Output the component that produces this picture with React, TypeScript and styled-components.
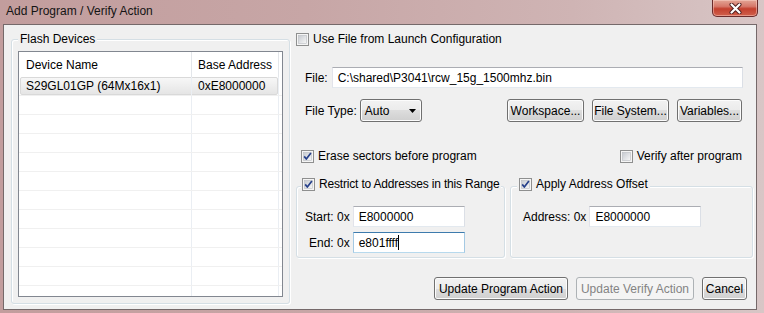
import { useId } from "react";
import styled, { createGlobalStyle } from "styled-components";

const GlobalStyle = createGlobalStyle`
  html, body {
    margin: 0;
    padding: 0;
    background: #fff;
  }
  body {
    font-family: "Liberation Sans", Arial, sans-serif;
    font-size: 12px;
    color: #000;
  }
  * {
    box-sizing: border-box;
  }
`;

const Frame = styled.div`
  width: 764px;
  height: 313px;
  display: flex;
  flex-direction: column;
  padding: 0 7px 3px 3px;
  background: linear-gradient(90deg, #c29d9d 0%, #c7a6a6 40%, #cfb4b4 75%, #d8c6c6 100%);
  overflow: hidden;
`;

const TitleBar = styled.div`
  height: 24px;
  flex: none;
  display: flex;
  align-items: flex-start;
  justify-content: space-between;
`;

const Title = styled.div`
  padding: 4px 0 0 3px;
  line-height: 15px;
  color: #141414;
`;

const CloseButton = styled.div`
  width: 46px;
  height: 17px;
  margin-right: -1px;
  display: flex;
  align-items: center;
  justify-content: center;
  border: 1px solid #6a2b2b;
  border-top: none;
  border-radius: 0 0 5px 5px;
  background: linear-gradient(#e3a595 0%, #d6786a 40%, #c3402e 55%, #d0604c 100%);
  box-shadow: inset 0 0 0 1px rgba(255, 220, 210, 0.45);
`;

const Client = styled.div`
  flex: 1;
  display: flex;
  gap: 6px;
  padding: 7px 3px 5px 7px;
  border: 1px solid #75696a;
  background: #f0f0f0;
`;

const GroupBox = styled.fieldset<{ $inset: number }>`
  margin: 0;
  min-width: 0;
  padding: 0 0 0 ${(p) => p.$inset}px;
  border: 1px solid #d5dfe5;
  border-radius: 3px;
  box-shadow: 1px 1px 0 #fff, inset 1px 1px 0 #fff;
`;

const Legend = styled.legend<{ $tight?: boolean }>`
  padding: 0 2px 0 ${(p) => (p.$tight ? 1 : 2)}px;
  line-height: 15px;
  background: #f0f0f0;
  letter-spacing: ${(p) => (p.$tight ? "-0.18px" : "normal")};
`;

const DevicesGroup = styled(GroupBox)`
  width: 279px;
  flex: none;
  padding: 4px 6px 6px 6px;
`;

const Table = styled.div`
  height: 246px;
  border: 1px solid #828790;
  background: #fff;
  overflow: hidden;
`;

const HeaderRow = styled.div`
  height: 25px;
  display: flex;
`;

const HeaderCell = styled.div<{ $w: number; $pad: number }>`
  width: ${(p) => p.$w}px;
  padding-left: ${(p) => p.$pad}px;
  display: flex;
  align-items: center;
  border-right: 1px solid #e3e6ea;
  white-space: nowrap;
`;

const Row = styled.div<{ $selected?: boolean }>`
  position: relative;
  height: 19px;
  display: flex;
  border-bottom: 1px solid #f0f0f0;

  ${(p) =>
    p.$selected &&
    `
    &::before {
      content: "";
      position: absolute;
      left: 1px;
      right: 4px;
      top: 0;
      bottom: 0;
      border: 1px solid #d9d9d9;
      border-radius: 2px;
      background: linear-gradient(#f7f7f7, #e5e5e5);
    }
  `}
`;

const Cell = styled.div<{ $w: number; $pad: number }>`
  position: relative;
  width: ${(p) => p.$w}px;
  padding-left: ${(p) => p.$pad}px;
  display: flex;
  align-items: center;
  border-right: 1px solid #eaeef3;
  white-space: nowrap;
`;

const RightPane = styled.div`
  flex: 1;
  display: flex;
  flex-direction: column;
`;

const CheckLabel = styled.label`
  display: inline-flex;
  align-items: center;
  gap: 4px;
  height: 15px;
  line-height: 15px;
  white-space: nowrap;
`;

const FileRow = styled.div`
  margin-top: 20px;
  padding: 0 10px 0 9px;
  display: flex;
  align-items: center;
  gap: 4px;
`;

const TextBox = styled.div<{ $w?: number; $focused?: boolean }>`
  height: 21px;
  ${(p) => (p.$w ? `width: ${p.$w}px;` : "flex: 1;")}
  display: flex;
  align-items: center;
  padding: 0 5px;
  background: #fff;
  border: 1px solid;
  border-color: ${(p) =>
    p.$focused ? "#3d7bad #a4c9e3 #b7d9ed #a4c9e3" : "#abadb3 #dbdfe6 #e3e9ef #e2e3ea"};
  white-space: nowrap;
`;

const Caret = styled.span`
  width: 1px;
  height: 15px;
  background: #000;
`;

const TypeRow = styled.div`
  margin-top: 11px;
  padding: 0 11px 0 9px;
  display: flex;
  align-items: center;
`;

const Select = styled.div`
  width: 62px;
  height: 23px;
  margin-left: 3px;
  padding: 0 5px 0 4px;
  display: flex;
  align-items: center;
  justify-content: space-between;
  border: 1px solid #707070;
  border-radius: 3px;
  background: linear-gradient(#f2f2f2 0%, #ebebeb 50%, #dddddd 50%, #cfcfcf 100%);
  box-shadow: inset 0 0 0 1px #fcfcfc;
`;

const ButtonGroup = styled.div`
  margin-left: auto;
  display: flex;
  gap: 8px;
`;

const Button = styled.button<{ $w: number }>`
  width: ${(p) => p.$w}px;
  height: 23px;
  padding: 0;
  font: inherit;
  color: #000;
  border: 1px solid #707070;
  border-radius: 3px;
  background: linear-gradient(#f2f2f2 0%, #ebebeb 50%, #dddddd 50%, #cfcfcf 100%);
  box-shadow: inset 0 0 0 1px #fcfcfc;
  white-space: nowrap;

  &:disabled {
    color: #838383;
    border-color: #adb2b5;
    background: #f4f4f4;
    box-shadow: none;
  }
`;

const OptionRow = styled.div`
  margin-top: 27px;
  padding: 0 11px 0 5px;
  display: flex;
  justify-content: space-between;
`;

const GroupsRow = styled.div`
  margin-top: 13px;
  height: 81px;
  display: flex;
  gap: 5px;
`;

const RangeGroup = styled(GroupBox)`
  width: 209px;
  flex: none;
`;

const OffsetGroup = styled(GroupBox)`
  flex: 1;
`;

const RangeGrid = styled.div`
  padding: 11px 0 0 4px;
  display: grid;
  grid-template-columns: auto 112px;
  justify-content: start;
  column-gap: 3px;
  row-gap: 5px;
  align-items: center;
  justify-items: end;
`;

const OffsetRow = styled.div`
  padding: 11px 0 0 6px;
  display: flex;
  align-items: center;
  gap: 3px;
`;

const ActionRow = styled.div`
  margin-top: 19px;
  padding-right: 6px;
  display: flex;
  justify-content: flex-end;
  gap: 8px;
`;

function CheckBox({ checked }: { checked?: boolean }) {
  const id = "cb" + useId().replace(/[^a-zA-Z0-9]/g, "");
  return (
    <svg width="13" height="13" viewBox="0 0 13 13">
      <defs>
        <linearGradient id={id} x1="0" y1="0" x2="1" y2="1">
          <stop offset="0" stopColor="#c6cad0" />
          <stop offset="1" stopColor="#f8f8f8" />
        </linearGradient>
      </defs>
      <rect x="0.5" y="0.5" width="12" height="12" fill="#f5f5f5" stroke="#8e8f8f" />
      <rect x="2.5" y="2.5" width="8" height="8" fill={`url(#${id})`} stroke="#b9bcc1" strokeWidth="0.6" />
      {checked && (
        <path d="M3.2 6.4 L5.3 9 L9.9 3" fill="none" stroke="#26408a" strokeWidth="1.7" strokeLinejoin="round" />
      )}
    </svg>
  );
}

function Check({ label, checked }: { label: string; checked?: boolean }) {
  return (
    <CheckLabel>
      <CheckBox checked={checked} />
      {label}
    </CheckLabel>
  );
}

const emptyRows = Array.from({ length: 11 }, (_, i) => i);

export default function App() {
  return (
    <>
      <GlobalStyle />
      <Frame>
        <TitleBar>
          <Title>Add Program / Verify Action</Title>
          <CloseButton>
            <svg width="13" height="11" viewBox="0 0 13 11">
              <path d="M2.5 1.5 L10.5 9.5 M10.5 1.5 L2.5 9.5" stroke="#4d1d1d" strokeWidth="4" strokeLinecap="round" />
              <path d="M2.5 1.5 L10.5 9.5 M10.5 1.5 L2.5 9.5" stroke="#fff" strokeWidth="2.2" strokeLinecap="round" />
            </svg>
          </CloseButton>
        </TitleBar>
        <Client>
          <DevicesGroup $inset={6}>
            <Legend>Flash Devices</Legend>
            <Table>
              <HeaderRow>
                <HeaderCell $w={173} $pad={7}>Device Name</HeaderCell>
                <HeaderCell $w={87} $pad={6}>Base Address</HeaderCell>
              </HeaderRow>
              <Row $selected>
                <Cell $w={173} $pad={7}>S29GL01GP (64Mx16x1)</Cell>
                <Cell $w={87} $pad={6}>0xE8000000</Cell>
              </Row>
              {emptyRows.map((i) => (
                <Row key={i}>
                  <Cell $w={173} $pad={7} />
                  <Cell $w={87} $pad={6} />
                </Row>
              ))}
            </Table>
          </DevicesGroup>

          <RightPane>
            <Check label="Use File from Launch Configuration" />

            <FileRow>
              File:
              <TextBox>C:\shared\P3041\rcw_15g_1500mhz.bin</TextBox>
            </FileRow>

            <TypeRow>
              File Type:
              <Select>
                Auto
                <svg width="7" height="4" viewBox="0 0 7 4">
                  <path d="M0 0 H7 L3.5 4 Z" fill="#000" />
                </svg>
              </Select>
              <ButtonGroup>
                <Button $w={77}>Workspace...</Button>
                <Button $w={77}>File System...</Button>
                <Button $w={65}>Variables...</Button>
              </ButtonGroup>
            </TypeRow>

            <OptionRow>
              <Check label="Erase sectors before program" checked />
              <Check label="Verify after program" />
            </OptionRow>

            <GroupsRow>
              <RangeGroup $inset={4}>
                <Legend $tight>
                  <Check label="Restrict to Addresses in this Range" checked />
                </Legend>
                <RangeGrid>
                  <span>Start: 0x</span>
                  <TextBox $w={112}>E8000000</TextBox>
                  <span>End: 0x</span>
                  <TextBox $w={112} $focused>
                    e801ffff
                    <Caret />
                  </TextBox>
                </RangeGrid>
              </RangeGroup>
              <OffsetGroup $inset={6}>
                <Legend>
                  <Check label="Apply Address Offset" checked />
                </Legend>
                <OffsetRow>
                  Address: 0x
                  <TextBox $w={112}>E8000000</TextBox>
                </OffsetRow>
              </OffsetGroup>
            </GroupsRow>

            <ActionRow>
              <Button $w={134}>Update Program Action</Button>
              <Button $w={118} disabled>
                Update Verify Action
              </Button>
              <Button $w={45}>Cancel</Button>
            </ActionRow>
          </RightPane>
        </Client>
      </Frame>
    </>
  );
}
